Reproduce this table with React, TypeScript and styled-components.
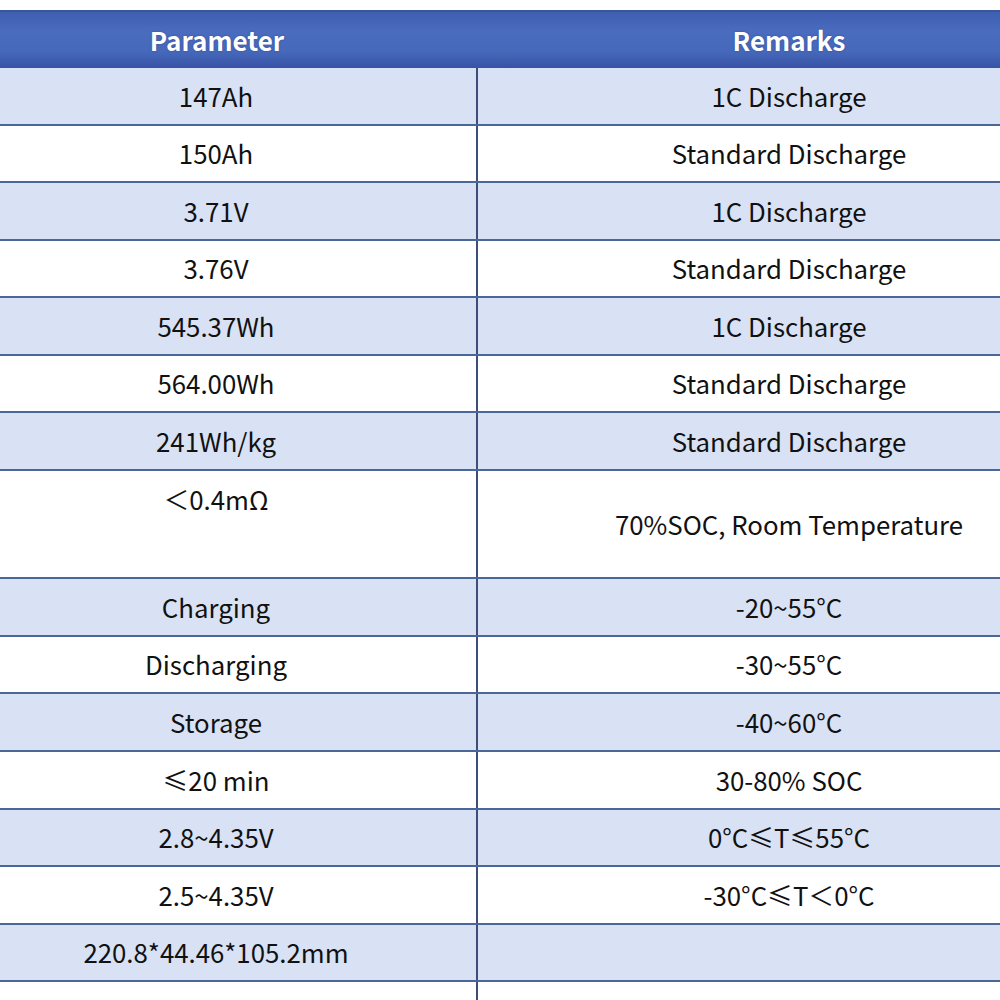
import React from "react";
import styled, { createGlobalStyle } from "styled-components";

const Global = createGlobalStyle`
  html, body { margin: 0; padding: 0; background: #ffffff; }
  body { font-family: "Noto Sans CJK SC", "Noto Sans", sans-serif; }
`;

const Page = styled.div`
  width: 1000px;
  height: 1000px;
  overflow: hidden;
  padding-top: 10px;
  box-sizing: border-box;
  background: #ffffff;
`;

const Table = styled.div`
  width: 1144px;
  margin-left: -44px;
  font-family: "Noto Sans CJK SC", "Noto Sans", sans-serif;
`;

const Header = styled.div`
  display: grid;
  grid-template-columns: 522px 1fr;
  height: 58px;
  box-sizing: border-box;
  border-top: 2px solid #3a559f;
  background: linear-gradient(180deg, #3f5eb0 0%, #4a6cbf 35%, #4769bb 70%, #3853a6 100%);
  color: #ffffff;
  font-weight: 700;
  font-size: 26px;
`;

const HeadCell = styled.div`
  display: flex;
  align-items: center;
  justify-content: center;
  padding-bottom: 2px;
  text-shadow: 0 0 2px rgba(20, 40, 110, 0.5);
`;

const Row = styled.div<{ $shaded: boolean; $h: number }>`
  display: grid;
  grid-template-columns: 522px 1fr;
  height: ${(p) => p.$h}px;
  box-sizing: border-box;
  border-bottom: 2px solid #4b6799;
  background: ${(p) => (p.$shaded ? "#d9e1f4" : "#ffffff")};
  color: #111111;
  font-size: 25.8px;
`;

const ParamCell = styled.div<{ $top?: boolean }>`
  display: flex;
  justify-content: center;
  align-items: ${(p) => (p.$top ? "flex-start" : "center")};
  padding-top: ${(p) => (p.$top ? "9px" : "0")};
  padding-bottom: ${(p) => (p.$top ? "0" : "2px")};
  border-right: 2px solid #3b4f78;
  box-sizing: border-box;
`;

const RemarkCell = styled.div`
  display: flex;
  justify-content: center;
  align-items: center;
  padding-bottom: 2px;
  box-sizing: border-box;
`;

type R = { p: string; r: string; top?: boolean };

const rows: R[] = [
  { p: "147Ah", r: "1C Discharge" },
  { p: "150Ah", r: "Standard Discharge" },
  { p: "3.71V", r: "1C Discharge" },
  { p: "3.76V", r: "Standard Discharge" },
  { p: "545.37Wh", r: "1C Discharge" },
  { p: "564.00Wh", r: "Standard Discharge" },
  { p: "241Wh/kg", r: "Standard Discharge" },
  { p: "＜0.4mΩ", r: "70%SOC, Room Temperature", top: true },
  { p: "Charging", r: "-20~55°C" },
  { p: "Discharging", r: "-30~55°C" },
  { p: "Storage", r: "-40~60°C" },
  { p: "≤20 min", r: "30-80% SOC" },
  { p: "2.8~4.35V", r: "0°C≤T≤55°C" },
  { p: "2.5~4.35V", r: "-30°C≤T＜0°C" },
  { p: "220.8*44.46*105.2mm", r: "" },
  { p: "", r: "" },
];

const heights = [58, 57, 58, 57, 58, 57, 58, 108, 58, 57, 58, 58, 57, 58, 57, 58];

export default function App() {
  return (
    <>
      <Global />
      <Page>
        <Table>
          <Header>
            <HeadCell>Parameter</HeadCell>
            <HeadCell>Remarks</HeadCell>
          </Header>
          {rows.map((row, i) => (
            <Row key={i} $shaded={i % 2 === 0} $h={heights[i]}>
              <ParamCell $top={row.top}>{row.p}</ParamCell>
              <RemarkCell>{row.r}</RemarkCell>
            </Row>
          ))}
        </Table>
      </Page>
    </>
  );
}
